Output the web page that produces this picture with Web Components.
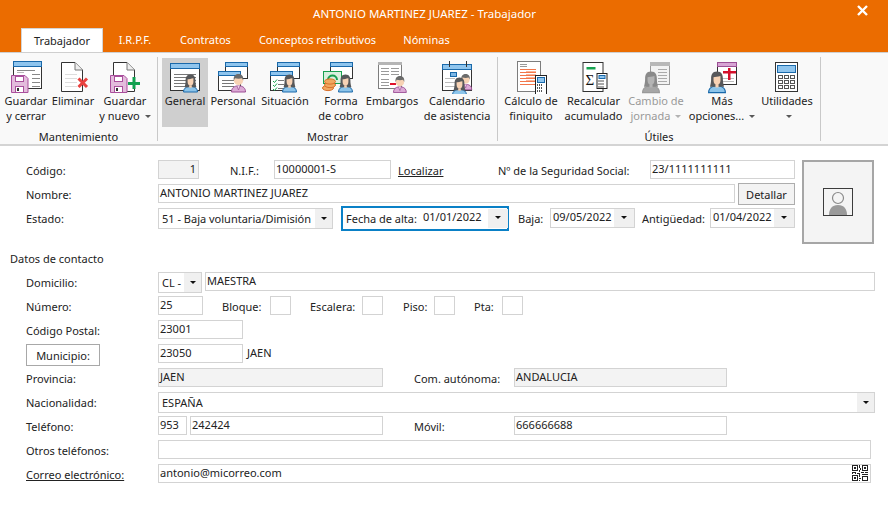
<!DOCTYPE html>
<html lang="es"><head><meta charset="utf-8"><title>Trabajador</title>
<style>
html,body{margin:0;padding:0;background:#fff;overflow:hidden}
body{font:11px "Noto Sans","Open Sans",sans-serif;color:#222;width:888px;height:528px}
</style></head><body>
<x-app>
  <x-titlebar slot="top">ANTONIO MARTINEZ JUAREZ - Trabajador</x-titlebar>
  <x-tabs slot="top">
    <x-tab active style="width:82px;margin-left:21px">Trabajador</x-tab>
    <x-tab style="width:34px;margin-left:15px">I.R.P.F.</x-tab>
    <x-tab style="width:51px;margin-left:28px">Contratos</x-tab>
    <x-tab style="width:117px;margin-left:28px">Conceptos retributivos</x-tab>
    <x-tab style="width:45px;margin-left:28px">Nóminas</x-tab>
  </x-tabs>
  <x-ribbon slot="top">
    <x-group label="Mantenimiento" style="width:157px;--pad:3px">
      <x-rbtn icon="gc" style="width:46px">Guardar<br>y cerrar</x-rbtn>
      <x-rbtn icon="el" style="width:48px">Eliminar</x-rbtn>
      <x-rbtn icon="gn" style="width:56px">Guardar<br>y nuevo<x-caret></x-caret></x-rbtn>
    </x-group>
    <x-group label="Mostrar" style="width:339px;--pad:4px">
      <x-rbtn icon="ge" active style="width:46px">General</x-rbtn>
      <x-rbtn icon="pe" style="width:50px">Personal</x-rbtn>
      <x-rbtn icon="si" style="width:54px">Situación</x-rbtn>
      <x-rbtn icon="fo" style="width:58px">Forma<br>de cobro</x-rbtn>
      <x-rbtn icon="em" style="width:44px">Embargos</x-rbtn>
      <x-rbtn icon="ca" style="width:76px;margin-left:5px">Calendario<br>de asistencia</x-rbtn>
    </x-group>
    <x-group label="Útiles" style="width:322px;--pad:2px">
      <x-rbtn icon="cf" style="width:62px">Cálculo de<br>finiquito</x-rbtn>
      <x-rbtn icon="re" style="width:63px">Recalcular<br>acumulado</x-rbtn>
      <x-rbtn icon="cj" disabled style="width:62px">Cambio de<br>jornada<x-caret></x-caret></x-rbtn>
      <x-rbtn icon="ma" style="width:70px">Más<br>opciones...<x-caret></x-caret></x-rbtn>
      <x-rbtn icon="ut" style="width:60px">Utilidades<br><x-caret></x-caret></x-rbtn>
    </x-group>
  </x-ribbon>
  <x-form>
    <x-top>
      <x-row>
        <x-label style="width:132px">Código:</x-label>
        <x-input ro right style="width:41px">1</x-input>
        <x-label style="width:44px;margin-left:31px">N.I.F.:</x-label>
        <x-input style="width:117px">10000001-S</x-input>
        <x-label u style="width:100px;margin-left:7px">Localizar</x-label>
        <x-label style="width:152px">Nº de la Seguridad Social:</x-label>
        <x-input style="width:145px">23/1111111111</x-input>
      </x-row>
      <x-row>
        <x-label style="width:132px">Nombre:</x-label>
        <x-input style="width:577px">ANTONIO MARTINEZ JUAREZ</x-input>
        <x-btn style="width:57px;margin-left:3px">Detallar</x-btn>
      </x-row>
      <x-row>
        <x-label style="width:132px">Estado:</x-label>
        <x-select style="width:175px">51 - Baja voluntaria/Dimisión</x-select>
        <x-focus style="margin-left:8px;width:168px">
          <x-label style="width:75px">Fecha de alta:</x-label>
          <x-select date style="width:87px">01/01/2022</x-select>
        </x-focus>
        <x-label style="width:32px;margin-left:9px">Baja:</x-label>
        <x-select date style="width:85px">09/05/2022</x-select>
        <x-label style="width:68px;margin-left:7px">Antigüedad:</x-label>
        <x-select date style="width:85px">01/04/2022</x-select>
      </x-row>
      <x-photo slot="photo"></x-photo>
    </x-top>
    <x-heading>Datos de contacto</x-heading>
    <x-row>
      <x-label style="width:132px">Domicilio:</x-label>
      <x-select style="width:44px">CL -</x-select>
      <x-input style="width:670px;margin-left:3px">MAESTRA</x-input>
    </x-row>
    <x-row>
      <x-label style="width:132px">Número:</x-label>
      <x-input style="width:45px">25</x-input>
      <x-label style="width:48px;margin-left:19px">Bloque:</x-label>
      <x-input style="width:21px"></x-input>
      <x-label style="width:52px;margin-left:19px">Escalera:</x-label>
      <x-input style="width:21px"></x-input>
      <x-label style="width:31px;margin-left:20px">Piso:</x-label>
      <x-input style="width:21px"></x-input>
      <x-label style="width:28px;margin-left:19px">Pta:</x-label>
      <x-input style="width:21px"></x-input>
    </x-row>
    <x-row>
      <x-label style="width:132px">Código Postal:</x-label>
      <x-input style="width:85px">23001</x-input>
    </x-row>
    <x-row>
      <x-btn mun style="width:74px;margin-right:58px">Municipio:</x-btn>
      <x-input style="width:85px">23050</x-input>
      <x-label style="width:60px;margin:-2px 0 0 4px">JAEN</x-label>
    </x-row>
    <x-row>
      <x-label style="width:132px">Provincia:</x-label>
      <x-input ro style="width:225px">JAEN</x-input>
      <x-label style="width:100px;margin-left:31px">Com. autónoma:</x-label>
      <x-input ro style="width:213px">ANDALUCIA</x-input>
    </x-row>
    <x-row>
      <x-label style="width:132px">Nacionalidad:</x-label>
      <x-select style="width:717px">ESPAÑA</x-select>
    </x-row>
    <x-row>
      <x-label style="width:132px">Teléfono:</x-label>
      <x-input style="width:29px">953</x-input>
      <x-input style="width:193px;margin-left:3px">242424</x-input>
      <x-label style="width:100px;margin-left:31px">Móvil:</x-label>
      <x-input style="width:213px">666666688</x-input>
    </x-row>
    <x-row>
      <x-label style="width:132px">Otros teléfonos:</x-label>
      <x-input style="width:713px"></x-input>
    </x-row>
    <x-row>
      <x-label u style="width:132px">Correo electrónico:</x-label>
      <x-input style="width:713px">antonio@micorreo.com<svg slot="end" width="18" height="16" viewBox="0 0 18 16" shape-rendering="crispEdges" fill="#222"><path d="M1 0h6v6H1zM2 1v4h4V1zM11 0h6v6h-6zM12 1v4h4V1zM1 10h6v6H1zM2 11v4h4v-4z" fill-rule="evenodd"/><path d="M3 2h2v2H3zM13 2h2v2h-2zM3 12h2v2H3zM8 0h1v3H8zM9 3h1v2H9zM8 5h1v2H8zM1 7h4v1H1zM1 8h1v1H1zM4 8h1v1H4zM6 8h3v1H6zM10 7h3v1h-3zM14 7h3v1h-3zM8 9h1v3H8zM11 9h6v1h-6zM8 13h2v1H8zM8 15h1v1H8zM11 11h6v5h-6zM12 12v3h4v-3z" fill-rule="evenodd"/></svg></x-input>
    </x-row>
  </x-form>
</x-app>
<script>
const def=(name,css,html,extra={})=>{
  customElements.define(name,class extends HTMLElement{
    constructor(){super();this.attachShadow({mode:'open'}).innerHTML=`<style>${css}</style>${typeof html==='function'?html(this):html}`}
    connectedCallback(){extra.connected&&extra.connected.call(this)}
  });
};
/* icon drawing in page coordinates */
const BL='#1a69aa',DK='#333';
const rect=(x,y,w,h,f,s,sw=1)=>`<rect x="${x+.5}" y="${y+.5}" width="${w-1}" height="${h-1}" fill="${f}" ${s?`stroke="${s}" stroke-width="${sw}"`:''}/>`;
const fill=(x,y,w,h,f)=>`<rect x="${x}" y="${y}" width="${w}" height="${h}" fill="${f}"/>`;
const lines=(x,y,w,n,gap,c)=>Array.from({length:n},(_,i)=>fill(x,y+i*gap,w,1,c)).join('');
const win=(x,y,w,h,tb=6)=>rect(x,y,w,h,'#fff',DK)+rect(x,y,w,tb,'#8fc5ee',BL);
const woman=(x,y,s=1,c={h:'#57585a',f:'#f7d2b4',b:'#8cc4ea',l:BL})=>`<g transform="translate(${x} ${y}) scale(${s})"><path d="M.5 18C.5 14.5 3 13 5.5 12.5h4C12 13 14.5 14.5 14.5 18Z" fill="${c.b}" stroke="${c.l}"/><path d="M7.5.5C3.5.5 2.6 3.5 2.6 6.5 2.6 9.2 2.2 11 1.6 13.2H13.4C12.8 11 12.4 9.2 12.4 6.5 12.4 3.5 11.5.5 7.5.5Z" fill="${c.h}"/><path d="M4.6 5.2C6 5.2 8.2 4.6 10.4 4.2V8C10.4 10.2 9 11.8 7.5 11.8S4.6 10.2 4.6 8Z" fill="${c.f}"/><path d="M6.2 11.5h2.6v2.2H6.2Z" fill="${c.f}"/></g>`;
const man=(x,y,s=1)=>`<g transform="translate(${x} ${y}) scale(${s})"><path d="M.5 19C.5 15 3 13.5 5.5 13h4C12 13.5 14.5 15 14.5 19Z" fill="#dcaad6" stroke="#9b4f94"/><path d="M6 13l1.5 4 1.5-4" fill="#f2d6ea" stroke="#9b4f94" stroke-width=".7"/><circle cx="7.5" cy="7.5" r="4.6" fill="#f7d2b4"/><path d="M2.8 7.5C2 2.6 5 1 7.5 1s5.5 1.6 4.7 6.5L11 5.2C9 5.8 6 5.8 4 5.2Z" fill="#6b6b6b"/></g>`;
const floppy=(x,y)=>`<path d="M${x+.5} ${y+.5}H${x+14}l3 3V${y+17.5}H${x+.5}Z" fill="#e3bcdc" stroke="#a94f9c"/>`+fill(x+4,y+1,9,6,'#fff')+rect(x+4,y+1,9,6,'none','#a94f9c')+fill(x+4,y+11,9,6,'#fff')+rect(x+4,y+11,9,7,'none','#a94f9c')+fill(x+6,y+13,2,3,'#333');
const doc=(x,y,w,h,c=DK)=>`<path d="M${x+.5} ${y+.5}H${x+w-8}l7.5 7.5V${y+h-.5}H${x+.5}Z" fill="#fff" stroke="${c}"/><path d="M${x+w-8} ${y+.5}V${y+8}h7.5" fill="#eee" stroke="#777"/>`;
const calc=(x,y,w,h)=>{let k='';const cw=Math.floor((w-4)/3);for(let r=0;r<3;r++)for(let i=0;i<3;i++)k+=fill(x+2+i*cw,y+Math.floor(h*.48)+r*3,cw-1,2,'#555');return rect(x,y,w,h,'#fff','#222')+rect(x+2,y+2,w-4,Math.floor(h*.3),'#8fc5ee',BL)+k};
const GRAY={h:'#8a8a8a',f:'#b4b4b4',b:'#a6a6a6',l:'#9a9a9a'};
const gline='#b8b8b8';
const ICONS={
 gc:[26,win(13,61,29,28)+lines(17,72,7,2,4,gline)+lines(32,74,8,4,4,'#888')+lines(17,70,18,1,1,'#888')+floppy(11,75)],
 el:[73,doc(61,62,22,30)+lines(65,74,12,4,4,'#ddd')+`<path d="M78.5 78.5l8.5 8.5M87 78.5l-8.5 8.5" stroke="#e8413f" stroke-width="3" fill="none"/>`],
 gn:[125,doc(113,62,22,30)+floppy(110,75)+fill(128,82,12,3,'#12a150')+fill(132.5,77,3,12,'#12a150')],
 ge:[185,win(170,63,30,28)+lines(174,74,22,5,3,'#777')+woman(183,74)],
 pe:[233,win(225,62,23,17,5)+win(218,71,23,20,5)+lines(222,80,12,3,3,'#777')+man(231,73)],
 si:[285,win(277,62,23,17,5)+win(270,71,23,20,5)+`<path d="M273 81l1.5 1.5 2.5-3M273 85l1.5 1.5 2.5-3M273 89l1.5 1.5 2.5-3" stroke="#1ba34d" fill="none"/>`+lines(278,80,6,3,4,'#777')+woman(282,74)],
 fo:[341,win(330,62,23,17,5)+rect(323,71,19,13,'#d9f0df','#18a050')+`<path d="M328 80c0-6 9-6 9 0" fill="none" stroke="#18a050" stroke-width="2"/>`+`<g fill="#f0a860" stroke="#d9702a"><ellipse cx="328" cy="88" rx="5.5" ry="2.6"/><ellipse cx="330" cy="85" rx="5.5" ry="2.6"/><ellipse cx="330" cy="81.5" rx="5.5" ry="2.6"/></g>`+woman(338,74)],
 em:[392,rect(378,62,24,27,'#fff','#7d7d7d')+fill(378,62,24,3,'#b5b5b5')+lines(381,68,8,3,3,'#9a9a9a')+lines(391,68,8,3,3,'#9a9a9a')+lines(381,79,8,3,3,'#9a9a9a')+fill(390,83,6,2,'#e0102a')+man(393,75,.92)],
 ca:[457,rect(442,64,30,27,'#fff',DK)+rect(442,64,30,6,'#8fc5ee',BL)+fill(449,61,1,6,'#333')+fill(466,61,1,6,'#333')+rect(450,72,7,5,'#7db7e6',BL)+lines(445,78,10,3,4,'#bbb')+man(459,73,.88)+woman(452,77,1)],
 cf:[531,rect(517,61,24,31,'#fff','#7d7d7d')+lines(520,64,7,2,2,'#999')+lines(520,69,16,6,3,'#f2764a')+lines(526,71,10,4,3,'#f9b69c')+calc(535,75,12,20)],
 re:[593.5,rect(582,62,21,30,'#fff',DK)+fill(586,67,9,2.5,'#17a350')+`<text x="585" y="85" font-family="Liberation Serif,serif" font-size="15" fill="#111">Σ</text>`+calc(596,73,11,16)],
 cj:[656,rect(650,62,20,23,'#f3f3f3','#9a9a9a')+fill(650,62,20,4,'#b8b8b8')+lines(658,69,9,5,3,'#aaa')+woman(642,71,1.2,GRAY)],
 ma:[722,rect(717,62,20,23,'#fff',DK)+rect(717,62,20,5,'#d7a4d4','#9b4f94')+lines(720,78,14,2,3,'#bbb')+fill(723,71,13,2.5,'#d40f2a')+fill(728,68,2.5,12,'#d40f2a')+woman(708,71,1.2)],
 ut:[787,rect(775,62,23,30,'#fff',DK)+rect(777,65,19,8,'#8fc5ee',BL)+[0,1,2].map(r=>[0,1,2].map(i=>rect(778+i*6,75+r*5,5,4,'#fff','#555')).join('')).join('')]
};
def('x-app',`:host{display:flex;flex-direction:column;width:888px;height:528px;background:#fff}`,`<slot name="top"></slot><slot></slot>`);
def('x-titlebar',`:host{display:flex;height:28px;box-sizing:border-box;padding-right:39px;background:#eb6c00;color:#fff;justify-content:center;align-items:center;font-size:11.5px;position:relative}
 span{display:block;line-height:28px}
 svg{position:absolute;right:20px;top:5px}`,`<span><slot></slot></span><svg width="11" height="11" viewBox="0 0 11 11"><path d="M1 1l9 9M10 1l-9 9" stroke="#fff" stroke-width="2.4"/></svg>`);
def('x-tabs',`:host{display:flex;height:24px;background:#eb6c00;align-items:stretch}`,`<slot></slot>`);
def('x-tab',`:host{display:flex;box-sizing:border-box;align-items:center;justify-content:center;color:#fff;white-space:nowrap;font-size:11px;padding-bottom:1px}
 :host([active]){background:#fff;color:#222;border:1px solid #d4d4d4;border-bottom:0;height:24px}`,`<slot></slot>`);
def('x-ribbon',`:host{display:flex;height:94px;box-sizing:border-box;background:#f9f9f9;border-top:1px solid #cfcfcf;border-bottom:2px solid #d4d4d4}`,`<slot></slot>`);
def('x-group',`:host{display:flex;flex-direction:column;height:100%;margin-right:1px;position:relative;flex:none}
 .b{display:flex;height:76px;padding-top:5px;padding-left:var(--pad,0);box-sizing:border-box}
 .l{text-align:center;line-height:16px;height:15px;color:#222}
 :host::after{content:"";position:absolute;right:-1px;top:4px;bottom:3px;width:1px;background:#c9c9c9}`,
 h=>`<div class="b"><slot></slot></div><div class="l">${h.getAttribute('label')}</div>`);
def('x-rbtn',`:host{display:flex;flex-direction:column;align-items:center;height:69px;flex:none;color:#222;line-height:15px;text-align:center;white-space:nowrap}
 :host([active]){background:#cfcfcf}
 :host([disabled]){color:#9a9a9a}
 svg{display:block;flex:none;margin-bottom:0}
 div{margin-top:-1px}`,
 h=>{const[c,d]=ICONS[h.getAttribute('icon')];return `<svg width="46" height="36" viewBox="${c-23} 58 46 36">${d}</svg><div><slot></slot></div>`});
def('x-caret',`:host{display:inline-block;width:0;height:0;border:3px solid transparent;border-top:3.5px solid currentColor;border-bottom:0;margin-left:5px;vertical-align:2px;opacity:.75}`,``);
def('x-form',`:host{display:block;padding:13px 0 0 26px}`,`<slot></slot>`);
def('x-top',`:host{display:flex;align-items:flex-start}.l{width:769px}::slotted(x-photo){margin-left:7px}`,`<div class="l"><slot></slot></div><slot name="photo"></slot>`);
def('x-row',`:host{display:flex;height:24px;align-items:flex-start}`,`<slot></slot>`);
def('x-label',`:host{display:block;flex:none;line-height:24px;height:24px;white-space:nowrap}
 :host([u]) span{text-decoration:underline}`,`<span><slot></slot></span>`);
def('x-input',`:host{display:flex;flex:none;box-sizing:border-box;height:19px;margin-top:1px;border:1px solid #d3d3d3;background:#fff;padding:0 1px 0 1px;line-height:15px;white-space:nowrap;overflow:hidden;align-items:flex-start;justify-content:space-between}
 :host([ro]){background:#f3f3f3}
 :host([right]){justify-content:flex-end;padding-right:2px}
 ::slotted(svg){margin:0 0 0 auto}`,`<span><slot></slot></span><slot name="end"></slot>`,
 {connected(){const s=this.querySelector('svg');if(s)s.setAttribute('slot','end')}});
def('x-select',`:host{display:flex;flex:none;box-sizing:border-box;height:21px;margin-top:1px;border:1px solid #d3d3d3;background:#fff;white-space:nowrap;overflow:hidden}
 span{flex:1;padding-left:3px;line-height:19px;overflow:hidden}
 i{flex:none;width:17px;background:#f0f0f0;display:flex;align-items:center;justify-content:center}
 i::after{content:"";border:3px solid transparent;border-top:3.5px solid #111;border-bottom:0}
 :host([date]){height:20px}
 :host([date]) span{padding-left:2px;line-height:15px}
 :host([date]) i{width:20px;padding-bottom:2px;box-sizing:border-box}`,`<span><slot></slot></span><i></i>`);
def('x-focus',`:host{display:flex;flex:none;box-sizing:border-box;height:25px;margin-top:-1px;border:2px solid #0a80c6;padding-left:3px;align-items:flex-start}
 ::slotted(x-label){line-height:22px;height:20px}
 ::slotted(x-select){margin-top:1px;border:0;height:19px}`,`<slot></slot>`);
def('x-btn',`:host{display:flex;flex:none;box-sizing:border-box;height:22px;border:1px solid #adadad;background:#f3f3f3;align-items:center;justify-content:center}
 :host([mun]){background:#fff;margin-top:1px;border-color:#a8a8a8}`,`<slot></slot>`);
def('x-heading',`:host{display:block;margin:3px 0 0 -16px;height:24px;line-height:24px}`,`<slot></slot>`);
def('x-photo',`:host{display:flex;flex:none;box-sizing:border-box;width:72px;height:84px;margin-top:1px;border:2px solid #a6a6a6;background:#f4f4f4;align-items:center;justify-content:center}`,
 `<svg width="30" height="28" viewBox="0 0 30 28"><rect x=".5" y=".5" width="29" height="27" fill="#f4f4f4" stroke="#3c3c3c"/><path d="M6 27C6 21 9 17 15 17S24 21 24 27Z" fill="#9a9a9a"/><circle cx="15" cy="10" r="5.5" fill="#f4f4f4" stroke="#8a8a8a" stroke-width="1.2"/></svg>`);
</script>
</body></html>
